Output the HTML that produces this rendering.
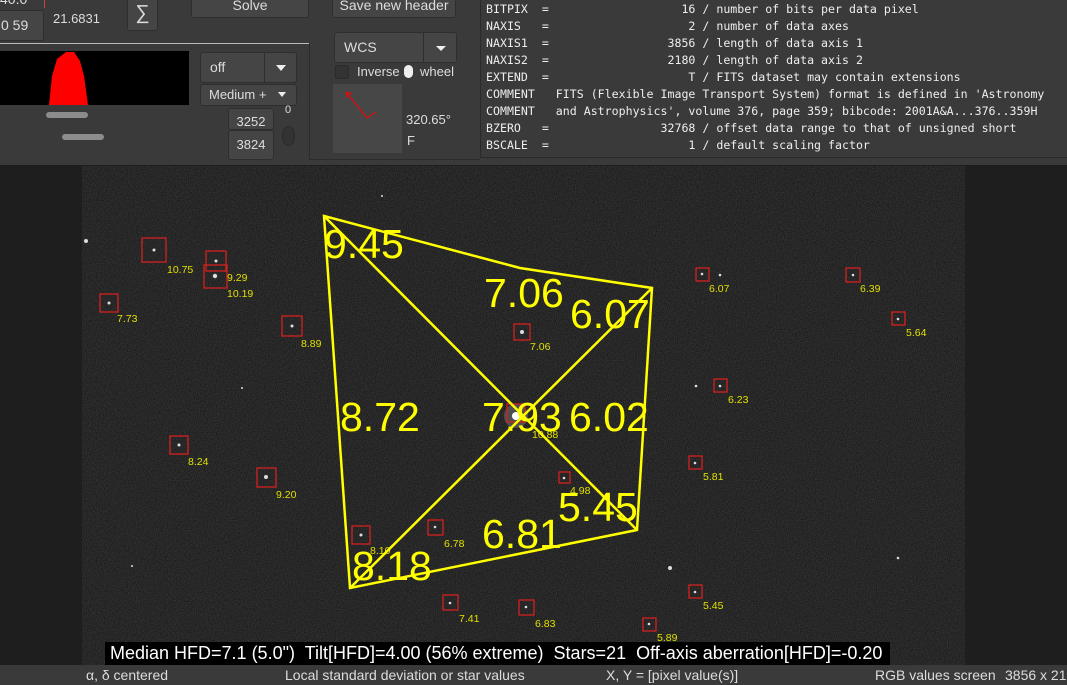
<!DOCTYPE html>
<html><head><meta charset="utf-8"><style>
*{margin:0;padding:0;box-sizing:border-box}
html,body{width:1067px;height:685px;overflow:hidden}
body{background:#1e1e1e;position:relative;font-family:"Liberation Sans","DejaVu Sans",sans-serif;color:#ddd;font-size:13px}
.a{position:absolute}
.btn{position:absolute;background:#454545;border:1px solid #2e2e2e;border-radius:3px;color:#ddd;text-align:center}
.fits{font-family:"DejaVu Sans Mono","Liberation Mono",monospace;font-size:11.6px;line-height:17px;white-space:pre;color:#eee}
</style></head><body>
<div class="a" style="left:0;top:0;width:1067px;height:165px;background:#3a3a3a"></div>
<div class="a" style="left:309px;top:43px;width:171px;height:117px;border-left:1px solid #2c2c2c;border-bottom:1px solid #2c2c2c"></div>
<div class="btn" style="left:-6px;top:10px;width:50px;height:31px;line-height:29px;text-align:left;padding-left:6px;font-size:14px">0 59</div>
<div class="a" style="left:0;top:-9px;font-size:14px">40.0</div>
<div class="a" style="left:44px;top:0;width:1px;height:8px;background:#c44"></div>
<div class="a" style="left:53px;top:11px;font-size:13px">21.6831</div>
<div class="btn" style="left:127px;top:-4px;width:31px;height:35px;line-height:33px;font-size:20px">∑</div>
<div class="a" style="left:0;top:43px;width:309px;height:1px;background:#bbb"></div>
<div class="a" style="left:0;top:51px;width:189px;height:54px;background:#000"></div>
<svg class="a" style="left:0;top:51px" width="189" height="54"><path d="M49 54 L52 25 L57 8 L66 1 L74 1 L80 10 L84 25 L88 54Z" fill="#f00"/></svg>
<div class="a" style="left:46px;top:112px;width:42px;height:6px;border-radius:3px;background:#8c8c8c"></div>
<div class="a" style="left:62px;top:134px;width:42px;height:6px;border-radius:3px;background:#8c8c8c"></div>
<div class="btn" style="left:200px;top:52px;width:97px;height:31px;line-height:29px;text-align:left;padding-left:9px;font-size:14px">off</div>
<div class="a" style="left:264px;top:53px;width:1px;height:29px;background:#2e2e2e"></div>
<div class="a" style="left:276px;top:65px;border:5px solid transparent;border-top:6px solid #eee;border-bottom:0"></div>
<div class="btn" style="left:200px;top:84px;width:97px;height:22px;line-height:20px;text-align:left;padding-left:8px;font-size:13px">Medium +</div>
<div class="a" style="left:278px;top:92px;border:4px solid transparent;border-top:5px solid #eee;border-bottom:0"></div>
<div class="btn" style="left:228px;top:108px;width:46px;height:22px;line-height:26px;font-size:13px">3252</div>
<div class="btn" style="left:228px;top:130px;width:46px;height:30px;line-height:28px;font-size:13px">3824</div>
<div class="a" style="left:285px;top:104px;font-size:11px;color:#ddd">0</div>
<div class="a" style="left:282px;top:126px;width:13px;height:20px;border-radius:50%;background:#333;border:1px solid #2a2a2a"></div>
<div class="btn" style="left:191px;top:-6px;width:118px;height:24px;line-height:20px;font-size:14px">Solve</div>
<div class="btn" style="left:332px;top:-6px;width:124px;height:24px;line-height:20px;font-size:14px">Save new header</div>
<div class="btn" style="left:334px;top:32px;width:123px;height:31px;line-height:29px;text-align:left;padding-left:9px;font-size:14px">WCS</div>
<div class="a" style="left:423px;top:33px;width:1px;height:29px;background:#2e2e2e"></div>
<div class="a" style="left:436px;top:46px;border:5px solid transparent;border-top:5px solid #eee;border-bottom:0"></div>
<div class="a" style="left:335px;top:65px;width:14px;height:14px;background:#333;border:1px solid #2a2a2a;border-radius:2px"></div>
<div class="a" style="left:357px;top:64px;font-size:13px">Inverse</div>
<div class="a" style="left:404px;top:65px;width:9px;height:13px;border-radius:5px;background:#eee"></div>
<div class="a" style="left:420px;top:64px;font-size:13px">wheel</div>
<div class="a" style="left:333px;top:84px;width:69px;height:69px;background:#474747"></div>
<svg class="a" style="left:333px;top:84px" width="69" height="69"><path d="M13 8 L34 34 L43 28 M13 8 l2 6 M13 8 l6 2" stroke="#f00" stroke-width="1" fill="none"/></svg>
<div class="a" style="left:406px;top:112px;font-size:13px">320.65°</div>
<div class="a" style="left:407px;top:133px;font-size:13px">F</div>
<div class="a" style="left:480px;top:-2px;width:587px;height:160px;background:#3a3a3a;border:1px solid #2a2a2a;border-right:0;overflow:hidden">
<div class="a fits" style="left:5px;top:2px">BITPIX  =                   16 / number of bits per data pixel
NAXIS   =                    2 / number of data axes
NAXIS1  =                 3856 / length of data axis 1
NAXIS2  =                 2180 / length of data axis 2
EXTEND  =                    T / FITS dataset may contain extensions
COMMENT   FITS (Flexible Image Transport System) format is defined in 'Astronomy
COMMENT   and Astrophysics', volume 376, page 359; bibcode: 2001A&amp;A...376..359H
BZERO   =                32768 / offset data range to that of unsigned short
BSCALE  =                    1 / default scaling factor</div></div>
<svg class="a" style="left:82px;top:166px" width="883" height="499" font-family="Liberation Sans,DejaVu Sans,sans-serif">
<defs><filter id="n" x="0" y="0" width="100%" height="100%"><feTurbulence type="fractalNoise" baseFrequency="0.9" numOctaves="1" seed="3"/><feColorMatrix type="matrix" values="0 0 0 0 1  0 0 0 0 1  0 0 0 0 1  0.6 0 0 0 -0.15"/></filter></defs>
<rect width="883" height="499" fill="#1c1c1c"/>
<rect width="883" height="499" filter="url(#n)" opacity="0.35"/>
<g fill="#ddd">
<circle cx="4" cy="75" r="2"/><circle cx="160" cy="222" r="1"/><circle cx="300" cy="30" r="1"/><circle cx="50" cy="400" r="1"/><circle cx="588" cy="402" r="2"/><circle cx="816" cy="392" r="1.3"/><circle cx="614" cy="220" r="1.3"/><circle cx="638" cy="109" r="1.3"/>
<circle cx="72" cy="84" r="1.5"/><circle cx="134" cy="95" r="1.5"/><circle cx="133" cy="110" r="2.2"/><circle cx="27" cy="137" r="1.5"/><circle cx="210" cy="160" r="1.5"/><circle cx="440" cy="166" r="2"/><circle cx="620" cy="108" r="1.3"/><circle cx="771" cy="109" r="1.3"/><circle cx="816" cy="153" r="1.3"/><circle cx="638" cy="220" r="1.3"/><circle cx="97" cy="279" r="1.5"/><circle cx="184" cy="311" r="2"/><circle cx="613" cy="297" r="1.3"/><circle cx="482" cy="312" r="1.3"/><circle cx="279" cy="369" r="1.5"/><circle cx="353" cy="361" r="1.3"/><circle cx="368" cy="437" r="1.3"/><circle cx="444" cy="441" r="1.3"/><circle cx="613" cy="426" r="1.3"/><circle cx="567" cy="458" r="1.3"/>
</g>
<circle cx="434" cy="250" r="12" fill="#999" opacity=".35"/><circle cx="434" cy="250" r="4" fill="#fff"/>
<g fill="none" stroke="#d42020" stroke-width="1.3">
<rect x="60" y="72" width="24" height="24"/><rect x="124" y="85" width="20" height="20"/><rect x="122" y="99" width="23" height="23"/><rect x="18" y="128" width="18" height="18"/><rect x="200" y="150" width="20" height="20"/><rect x="432" y="158" width="16" height="16"/><rect x="614" y="102" width="13" height="13"/><rect x="764" y="102" width="14" height="14"/><rect x="810" y="146" width="13" height="13"/><rect x="632" y="213" width="13" height="13"/><rect x="88" y="270" width="18" height="18"/><rect x="175" y="302" width="19" height="19"/><rect x="607" y="290" width="13" height="13"/><rect x="477" y="306" width="11" height="11"/><rect x="270" y="360" width="18" height="18"/><rect x="346" y="354" width="15" height="15"/><rect x="361" y="429" width="15" height="15"/><rect x="437" y="434" width="15" height="15"/><rect x="607" y="419" width="13" height="13"/><rect x="561" y="452" width="13" height="13"/><rect x="425" y="238" width="18" height="18"/>
</g>
<g fill="#e0e000" font-size="10.5">
<text x="85" y="107">10.75</text><text x="145" y="115">9.29</text><text x="145" y="131">10.19</text><text x="35" y="156">7.73</text><text x="219" y="181">8.89</text><text x="448" y="184">7.06</text><text x="627" y="126">6.07</text><text x="778" y="126">6.39</text><text x="824" y="170">5.64</text><text x="646" y="237">6.23</text><text x="106" y="299">8.24</text><text x="194" y="332">9.20</text><text x="621" y="314">5.81</text><text x="488" y="328">4.98</text><text x="288" y="388">8.10</text><text x="362" y="381">6.78</text><text x="377" y="456">7.41</text><text x="453" y="461">6.83</text><text x="621" y="443">5.45</text><text x="575" y="475">5.89</text><text x="450" y="272">10.88</text>
</g>
<g stroke="#ffff00" stroke-width="2.5" fill="none">
<path d="M242 50 L438 102 L570 122 L555 364 L268 422 Z"/>
<path d="M242 50 L555 364 M570 122 L268 422"/>
</g>
<g fill="#ffff00" font-size="41">
<text x="242" y="92">9.45</text><text x="402" y="141">7.06</text><text x="488" y="162">6.07</text><text x="258" y="265">8.72</text><text x="400" y="265">7.93</text><text x="487" y="265">6.02</text><text x="476" y="355">5.45</text><text x="400" y="382">6.81</text><text x="270" y="414">8.18</text>
</g>
</svg>
<div class="a" style="left:105px;top:642px;width:785px;height:23px;background:#000;color:#fff;font-size:18px;line-height:23px;padding-left:5px;white-space:nowrap;overflow:hidden">Median HFD=7.1 (5.0")&nbsp; Tilt[HFD]=4.00 (56% extreme)&nbsp; Stars=21&nbsp; Off-axis aberration[HFD]=-0.20</div>
<div class="a" style="left:0;top:665px;width:1067px;height:20px;background:#3a3a3a;font-size:14px;line-height:20px;color:#ddd;white-space:nowrap;overflow:hidden">
<span class="a" style="left:86px;top:0">α, δ centered</span>
<span class="a" style="left:285px;top:0">Local standard deviation or star values</span>
<span class="a" style="left:606px;top:0">X, Y = [pixel value(s)]</span>
<span class="a" style="left:875px;top:0">RGB values screen</span>
<span class="a" style="left:1005px;top:0">3856 x 2180</span>
</div>
</body></html>
